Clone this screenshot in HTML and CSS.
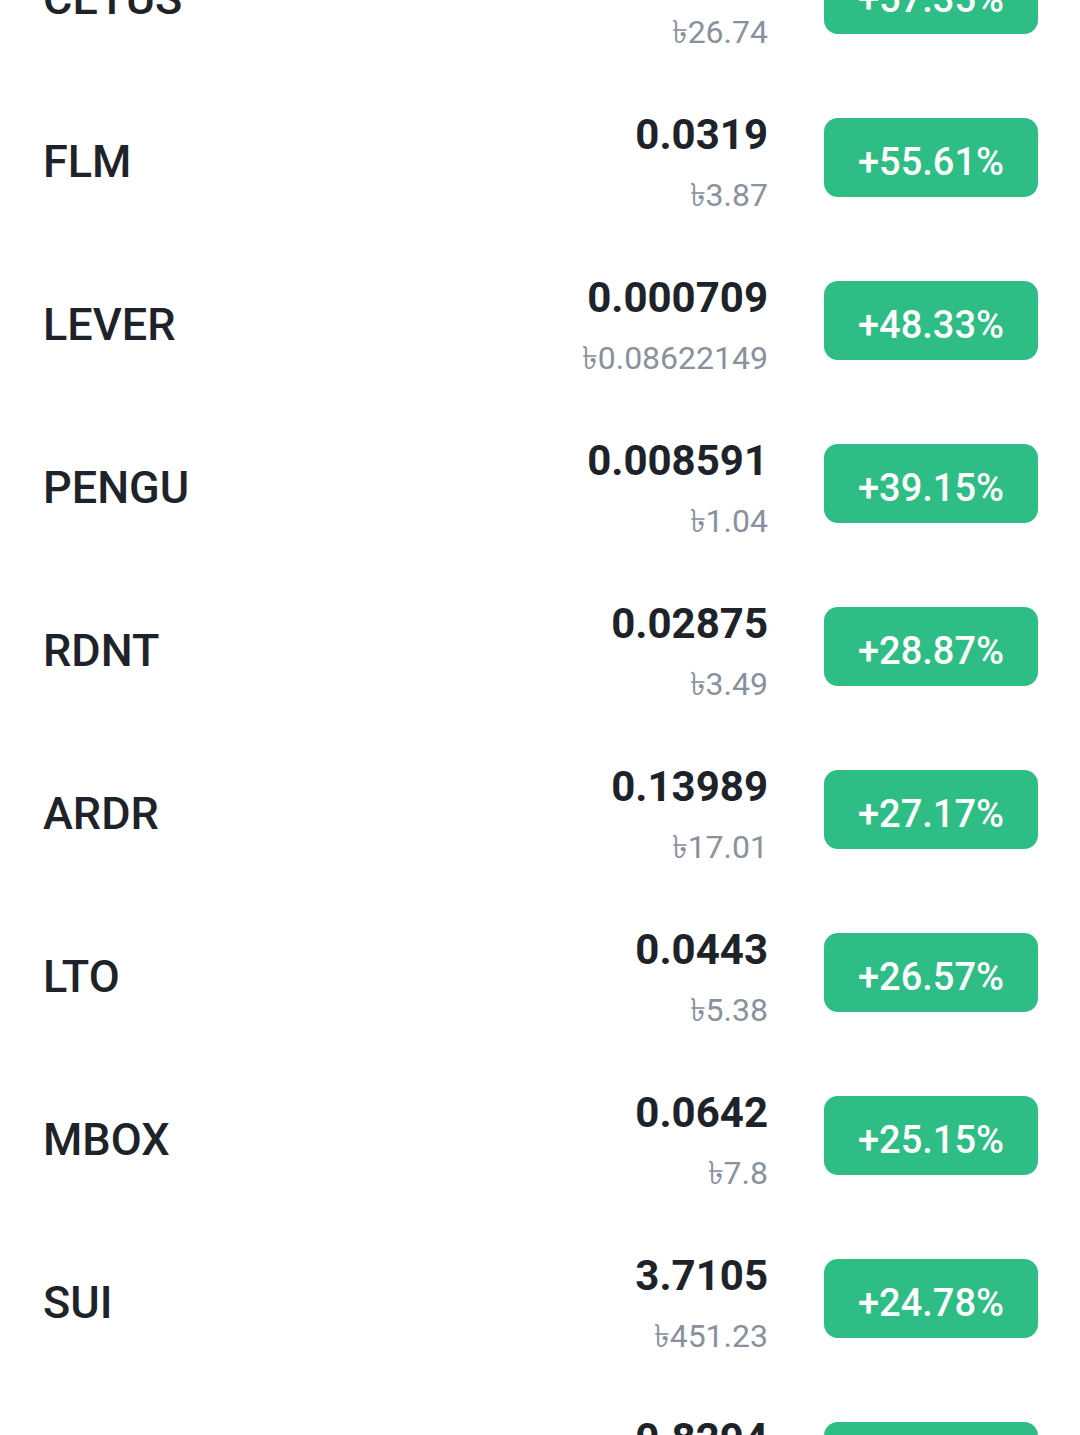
FILE: index.html
```html
<!DOCTYPE html>
<html lang="en">
<head>
  <meta charset="UTF-8">
  <title>Gainers</title>
  <link rel="stylesheet" href="styles.css">
</head>
<body>
  <div class="market-list">
    <div class="row">
      <div class="name">CETUS</div>
      <div class="price"><div class="last">0.2198</div><div class="fiat">৳26.74</div></div>
      <div class="change">+57.35%</div>
    </div>
    <div class="row">
      <div class="name">FLM</div>
      <div class="price"><div class="last">0.0319</div><div class="fiat">৳3.87</div></div>
      <div class="change">+55.61%</div>
    </div>
    <div class="row">
      <div class="name">LEVER</div>
      <div class="price"><div class="last">0.000709</div><div class="fiat">৳0.08622149</div></div>
      <div class="change">+48.33%</div>
    </div>
    <div class="row">
      <div class="name">PENGU</div>
      <div class="price"><div class="last">0.008591</div><div class="fiat">৳1.04</div></div>
      <div class="change">+39.15%</div>
    </div>
    <div class="row">
      <div class="name">RDNT</div>
      <div class="price"><div class="last">0.02875</div><div class="fiat">৳3.49</div></div>
      <div class="change">+28.87%</div>
    </div>
    <div class="row">
      <div class="name">ARDR</div>
      <div class="price"><div class="last">0.13989</div><div class="fiat">৳17.01</div></div>
      <div class="change">+27.17%</div>
    </div>
    <div class="row">
      <div class="name">LTO</div>
      <div class="price"><div class="last">0.0443</div><div class="fiat">৳5.38</div></div>
      <div class="change">+26.57%</div>
    </div>
    <div class="row">
      <div class="name">MBOX</div>
      <div class="price"><div class="last">0.0642</div><div class="fiat">৳7.8</div></div>
      <div class="change">+25.15%</div>
    </div>
    <div class="row">
      <div class="name">SUI</div>
      <div class="price"><div class="last">3.7105</div><div class="fiat">৳451.23</div></div>
      <div class="change">+24.78%</div>
    </div>
    <div class="row">
      <div class="name">ENA</div>
      <div class="price"><div class="last">0.8294</div><div class="fiat">৳100.91</div></div>
      <div class="change">+24.12%</div>
    </div>
  </div>
</body>
</html>
```

FILE: styles.css
```css
body { margin: 0; background: #fff; font-family: Roboto, "Noto Sans", sans-serif; color: #1e2329; overflow: hidden; }
.market-list { margin-top: -88px; }
.row { display: flex; align-items: center; height: 163px; padding: 0 42px 0 43px; }
.name { flex: 1; font-size: 45px; font-weight: 500; padding-top: 10px; }
.price { text-align: right; margin-right: 56px; padding-top: 13px; }
.last { font-size: 42px; font-weight: 700; line-height: 50px; }
.fiat { font-size: 32px; color: #8a919e; line-height: 44px; margin-top: 13px; }
.change { box-sizing: border-box; width: 214px; height: 79px; padding-top: 9px; margin-top: 2px; border-radius: 14px; background: #2ebd85; color: #fff; font-size: 38px; font-weight: 500; display: flex; align-items: center; justify-content: center; }
```
